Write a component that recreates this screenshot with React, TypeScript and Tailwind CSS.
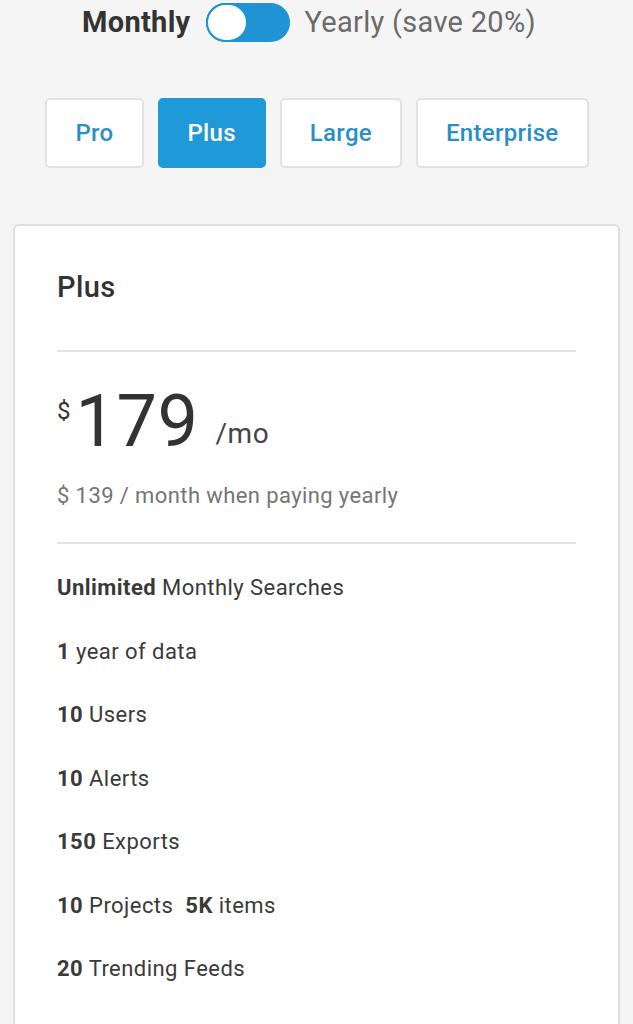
import React from "react";

const features: { b: string; t: string; b2?: string; t2?: string }[] = [
  { b: "Unlimited", t: " Monthly Searches" },
  { b: "1", t: " year of data" },
  { b: "10", t: " Users" },
  { b: "10", t: " Alerts" },
  { b: "150", t: " Exports" },
  { b: "10", t: " Projects", b2: "5K", t2: " items" },
  { b: "20", t: " Trending Feeds" },
];

export default function App() {
  const tabs = ["Pro", "Plus", "Large", "Enterprise"];
  return (
    <div
      className="min-h-[1024px] bg-[#f5f5f5] overflow-hidden"
      style={{ fontFamily: "Roboto, 'Noto Sans', sans-serif" }}
    >
      <div className="flex h-[44px] items-center justify-center gap-[15px] pr-[15px]">
        <span className="text-[29px] leading-[40px] font-bold tracking-[0.3px] text-[#333]">Monthly</span>
        <div className="relative h-[39px] w-[84px] rounded-full bg-[#1f93d4]">
          <div className="absolute left-0 top-0 h-[39px] w-[42px] rounded-full border-2 border-[#1f93d4] bg-white" />
        </div>
        <span className="text-[29px] leading-[40px] tracking-[0.3px] text-[#6b6b6b]">Yearly (save 20%)</span>
      </div>

      <div className="mt-[54px] flex justify-center gap-[14px] pl-[1px]">
        {tabs.map((t) => (
          <div
            key={t}
            className={
              t === "Plus"
                ? "flex h-[70px] items-center rounded-[5px] border-2 border-[#1f99d8] bg-[#1f99d8] px-[28px] text-[24px] font-medium tracking-[0.3px] text-white"
                : "flex h-[70px] items-center rounded-[5px] border-2 border-[#e2e2e2] bg-white px-[28px] text-[24px] font-medium tracking-[0.3px] text-[#2a8fc6]"
            }
          >
            {t}
          </div>
        ))}
      </div>

      <div className="mx-[13px] mt-[56px] min-h-[900px] rounded-[6px] border-2 border-[#dedede] bg-white px-[42px] pt-[43px] pb-16">
        <h2 className="text-[29px] leading-[36px] font-medium tracking-[0.4px] text-[#333]">Plus</h2>
        <div className="mt-[45px] h-[2px] bg-[#e3e3e3]" />

        <div className="mt-[34px] flex items-start text-[#333]">
          <span className="mt-[13px] text-[24px] leading-none">$</span>
          <span className="ml-[5px] text-[72px] leading-none tracking-[0.5px]">179</span>
          <span className="ml-[17px] mt-[34px] text-[28px] leading-none tracking-[0.6px] text-[#444]">/mo</span>
        </div>

        <p className="mt-[23px] text-[22px] leading-[30px] tracking-[0.4px] text-[#757575]">$ 139 / month when paying yearly</p>
        <div className="mt-[31px] h-[2px] bg-[#e3e3e3]" />

        <ul className="mt-[28px] flex flex-col gap-[31.5px] text-[22px] leading-[32px] tracking-[0.45px] text-[#3a3a3a]">
          {features.map((f, i) => (
            <li key={i}>
              <span className="font-bold">{f.b}</span>
              {f.t}
              {f.b2 && (
                <>
                  <span className="ml-[12px] font-bold">{f.b2}</span>
                  {f.t2}
                </>
              )}
            </li>
          ))}
        </ul>
      </div>
    </div>
  );
}
